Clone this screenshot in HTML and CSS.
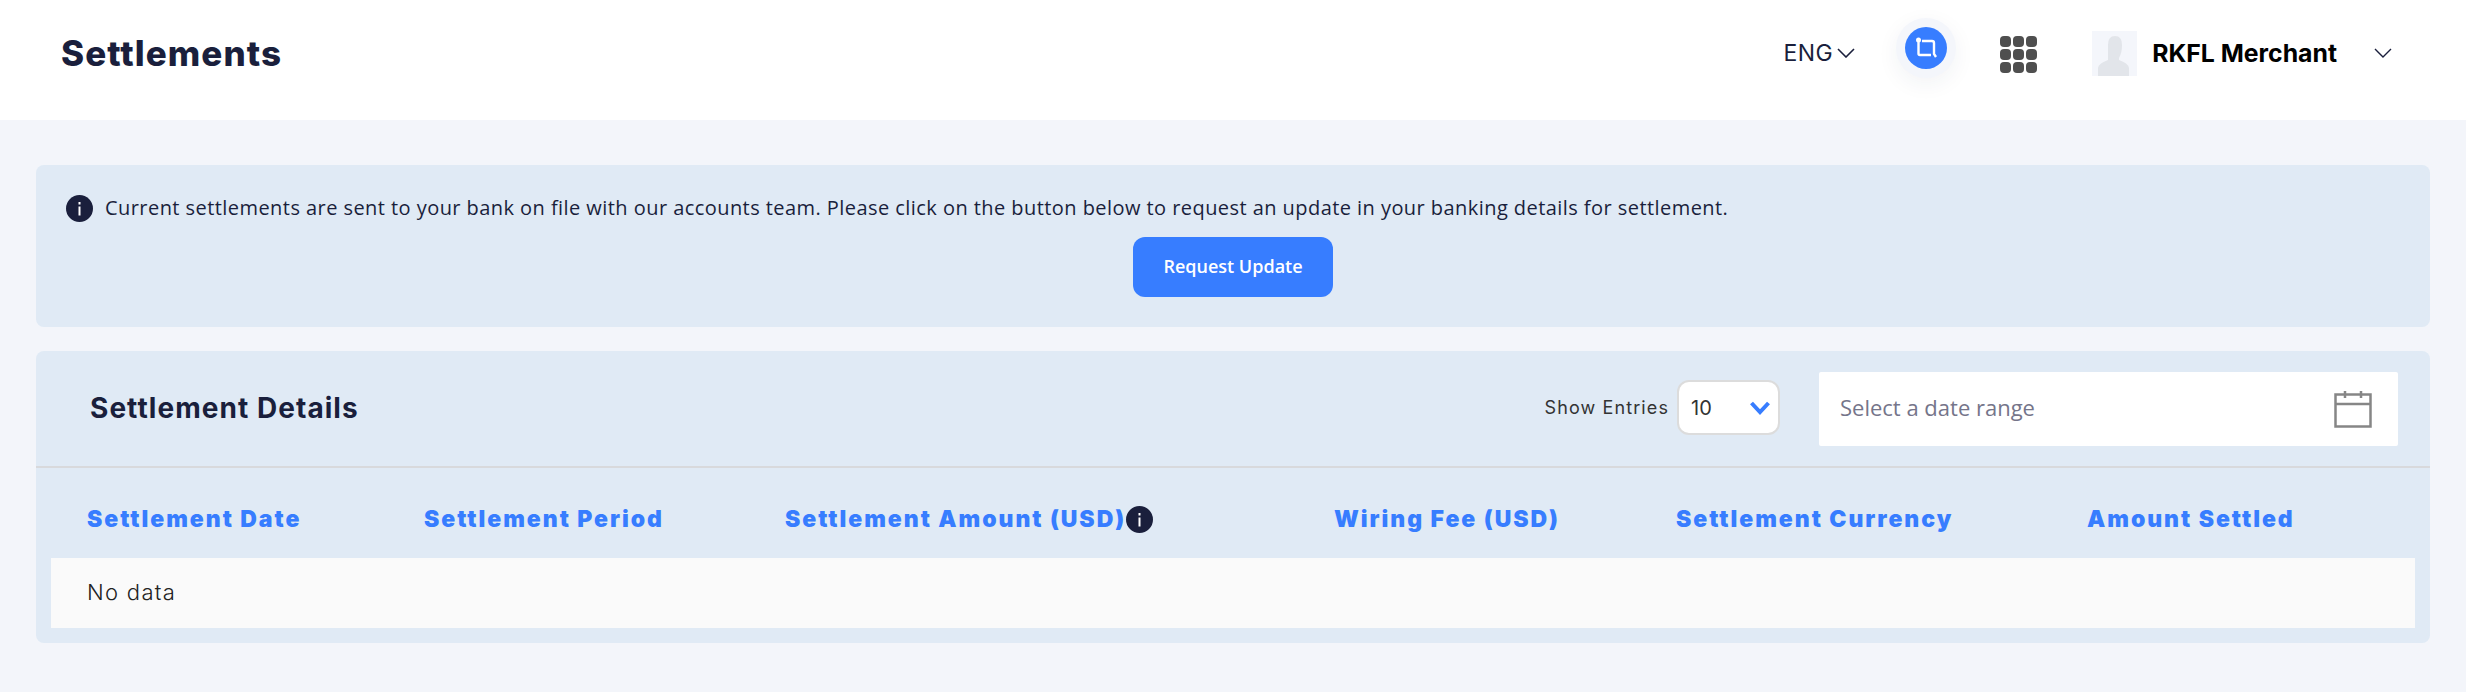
FILE: index.html
```html
<!DOCTYPE html>
<html lang="en">
<head>
    <meta charset="UTF-8">
    <meta name="viewport" content="width=device-width, initial-scale=1.0">
    <title>Settlements</title>
    <link rel="stylesheet" href="styles.css">
</head>
<body>
    <header class="topbar">
        <h1 class="page-title">Settlements</h1>
        <div class="topbar-right">
            <div class="lang">
                <span>ENG</span>
                <svg width="18" height="10" viewBox="0 0 18 10"><path d="M1 1l8 8 8-8" fill="none" stroke="#1a1f3c" stroke-width="1.6"/></svg>
            </div>
            <div class="halo">
                <div class="halo-dot">
                    <svg width="24" height="24" viewBox="0 0 24 24" fill="none" stroke="#fff" stroke-width="2.4">
                        <circle cx="4.5" cy="4" r="2.500" fill="#fff" stroke="none"/>
                        <path d="M4.5 6v11.5q0 1.500 1.500 1.500h11"/>
                        <path d="M8 5h10q2 0 2 2v11l2 3"/>
                    </svg>
                </div>
            </div>
            <div class="apps">
                <i></i><i></i><i></i><i></i><i></i><i></i><i></i><i></i><i></i>
            </div>
            <div class="user">
                <div class="avatar">
                    <svg width="45" height="45" viewBox="0 0 45 45">
                        <path d="M16 14q0-9 7-9t7 9q0 8-3 13v2q9 3 10 8v8H6v-8q1-5 10-8v-2q-0-5 0-13z" fill="#e2e5ea"/>
                    </svg>
                </div>
                <span class="user-name">RKFL Merchant</span>
                <svg width="18" height="10" viewBox="0 0 18 10"><path d="M1 1l8 8 8-8" fill="none" stroke="#1a1f3c" stroke-width="1.4"/></svg>
            </div>
        </div>
    </header>

    <main class="content">
        <!-- Bank notice -->
        <section class="card notice">
            <p class="notice-text">
                <svg class="info-icon" width="27" height="27" viewBox="0 0 27 27"><circle cx="13.5" cy="13.5" r="13.500" fill="#1a1f3c"/><rect x="12.500" y="11.500" width="2" height="9" fill="#fff"/><rect x="12.500" y="7" width="2" height="2.500" fill="#fff"/></svg>
                Current settlements are sent to your bank on file with our accounts team. Please click on the button below to request an update in your banking details for settlement.
            </p>
            <button class="btn-primary">Request Update</button>
        </section>

        <!-- Details table -->
        <section class="card details">
            <div class="details-head">
                <h2>Settlement Details</h2>
                <div class="entries">
                    <span>Show Entries</span>
                    <div class="entries-select">
                        <span>10</span>
                        <svg width="22" height="14" viewBox="0 0 22 14"><path d="M2.500 2l8.500 9 8.500-9" fill="none" stroke="#377dff" stroke-width="4"/></svg>
                    </div>
                </div>
                <div class="date-range">
                    <input placeholder="Select a date range">
                    <svg width="38" height="38" viewBox="0 0 38 38" fill="none" stroke="#868686" stroke-width="2.500">
                        <rect x="1.500" y="4.500" width="35" height="32"/>
                        <path d="M1.500 14h35M11 1v7M27 1v7"/>
                    </svg>
                </div>
            </div>
            <div class="table-head">
                <div>Settlement Date</div>
                <div>Settlement Period</div>
                <div class="with-icon">Settlement Amount (USD)<svg width="27" height="27" viewBox="0 0 27 27"><circle cx="13.5" cy="13.5" r="13.500" fill="#1a1f3c"/><rect x="12.500" y="11.500" width="2" height="9" fill="#fff"/><rect x="12.500" y="7" width="2" height="2.500" fill="#fff"/></svg></div>
                <div>Wiring Fee (USD)</div>
                <div>Settlement Currency</div>
                <div>Amount Settled</div>
            </div>
            <div class="table-empty">No data</div>
        </section>
    </main>
</body>
</html>
```

FILE: styles.css
```css
body {
    margin: 0;
    background-color: #f3f5fa;
    color: #1a1f3c;
    font-family: "Inter", "Open Sans", sans-serif;
}

.topbar {
    height: 120px;
    box-sizing: border-box;
    background-color: #fff;
    display: flex;
    justify-content: space-between;
    align-items: center;
    padding: 0 74px 14px 61px;
}
.page-title {
    margin: 0;
    font-size: 35px;
    font-weight: 800;
    letter-spacing: 1.050px;
    color: #1a1f3c;
}
.topbar-right {
    display: flex;
    align-items: center;
}
.lang {
    display: flex;
    align-items: center;
    gap: 4px;
    font-size: 23px;
    letter-spacing: 0.4px;
    margin-right: 41px;
}
.halo {
    width: 60px;
    height: 60px;
    border-radius: 50%;
    background-color: #f4f6fb;
    box-shadow: 0 6px 22px rgba(40, 50, 90, 0.06);
    display: flex;
    align-items: center;
    justify-content: center;
    margin-right: 44px;
    margin-top: -10px;
}
.halo-dot {
    width: 42px;
    height: 42px;
    border-radius: 50%;
    background-color: #377dff;
    display: flex;
    align-items: center;
    justify-content: center;
}
.apps {
    display: grid;
    grid-template-columns: repeat(3, 11px);
    grid-auto-rows: 11px;
    gap: 2px;
    margin-right: 55px;
    margin-top: 3px;
}
.apps i {
    background-color: #4f4f4f;
    border-radius: 4px;
}
.user {
    display: flex;
    align-items: center;
}
.avatar {
    width: 45px;
    height: 45px;
    background-color: #f4f6fb;
    margin-right: 15px;
}
.avatar svg {
    display: block;
}
.user-name {
    font-size: 24.800px;
    font-weight: 700;
    color: #000;
    margin-right: 37px;
}

.content {
    padding: 45px 36px 0;
}
.card {
    background-color: #e0eaf5;
    border-radius: 8px;
}
.notice {
    height: 162px;
    box-sizing: border-box;
    padding: 28px 30px 0;
    margin-bottom: 24px;
    text-align: center;
}
.notice-text {
    margin: 0 0 14px;
    display: flex;
    align-items: center;
    gap: 12px;
    font-family: "Open Sans", sans-serif;
    font-size: 20px;
    letter-spacing: 0.44px;
    line-height: 30px;
}
.btn-primary {
    width: 200px;
    height: 60px;
    border: none;
    border-radius: 12px;
    background-color: #377dff;
    color: #fff;
    font-family: "Open Sans", sans-serif;
    font-size: 18px;
    font-weight: 600;
    padding-bottom: 3px;
}

.details {
    height: 292px;
}
.details-head {
    height: 115px;
    border-bottom: 2px solid #d8d9dc;
    display: flex;
    align-items: center;
    padding: 0 32px 0 54px;
}
.details-head h2 {
    margin: -2px auto 0 0;
    font-size: 28px;
    font-weight: 700;
    letter-spacing: 1.050px;
}
.entries {
    display: flex;
    align-items: center;
    gap: 8px;
    font-size: 18px;
    letter-spacing: 1.1px;
    color: #333;
    margin: -2px 39px 0 0;
}
.entries-select {
    width: 103px;
    height: 55px;
    box-sizing: border-box;
    background-color: #fff;
    border: 2px solid #dcdcdc;
    border-radius: 12px;
    display: flex;
    align-items: center;
    justify-content: space-between;
    padding: 0 7px 0 12px;
    font-size: 20px;
    letter-spacing: 0;
}
.date-range {
    width: 579px;
    height: 74px;
    box-sizing: border-box;
    background-color: #fff;
    border-radius: 2px;
    display: flex;
    align-items: center;
    padding: 0 26px 0 19px;
}
.date-range input {
    flex: 1;
    border: none;
    outline: none;
    font-family: "Open Sans", sans-serif;
    font-size: 22px;
    padding-bottom: 4px;
}
.date-range input::placeholder {
    color: #75758a;
}

.table-head {
    display: grid;
    grid-template-columns: 337px 361px 549px 342px 411px 1fr;
    height: 90px;
    box-sizing: border-box;
    padding: 12px 0 0 51px;
    align-items: center;
    font-size: 23px;
    font-weight: 900;
    letter-spacing: 1.950px;
    color: #377dff;
}
.with-icon {
    display: flex;
    align-items: center;
}
.table-empty {
    margin: 0 15px;
    height: 70px;
    box-sizing: border-box;
    background-color: #fafafa;
    display: flex;
    align-items: center;
    padding: 0 0 3px 36px;
    font-size: 22px;
    font-weight: 300;
    letter-spacing: 1.3px;
    color: #222;
}
```
